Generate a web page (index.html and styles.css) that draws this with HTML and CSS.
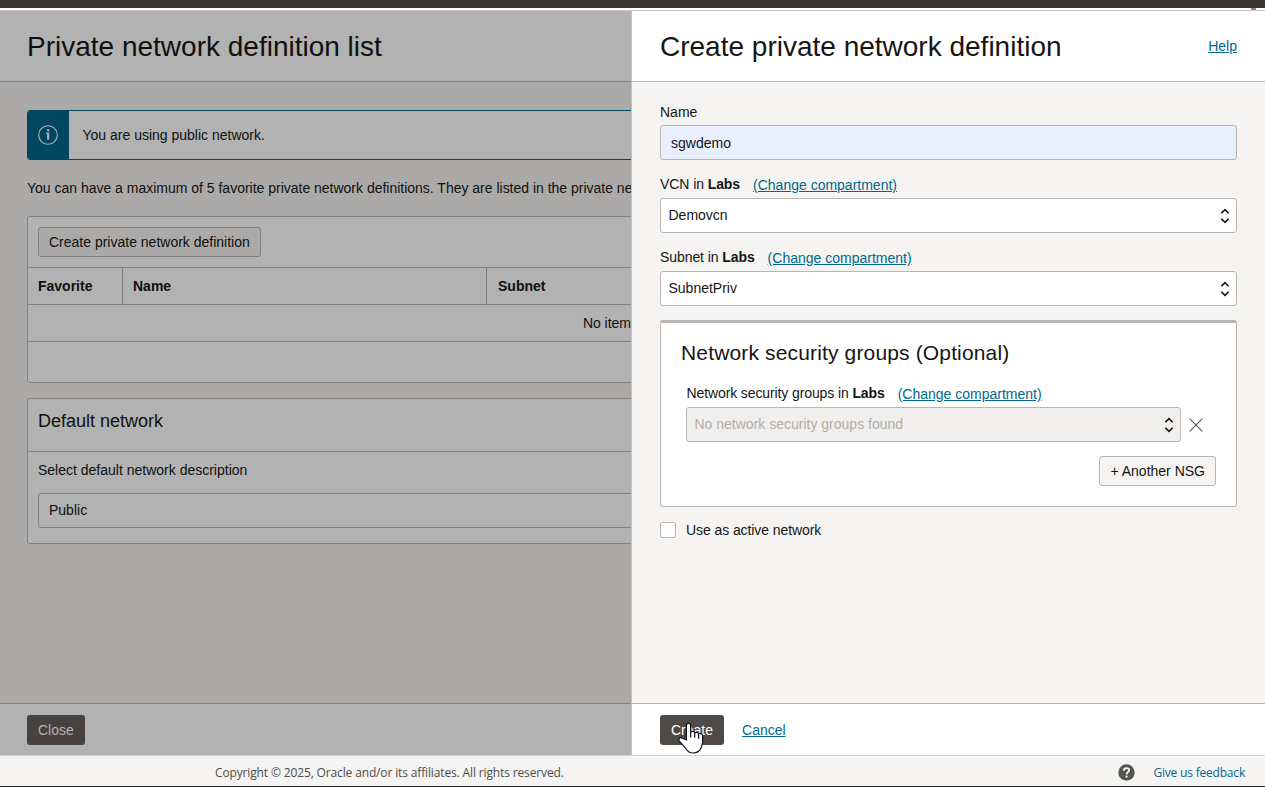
FILE: index.html
```html
<!DOCTYPE html>
<html lang="en">
<head>
<meta charset="utf-8">
<title>Create private network definition</title>
<link rel="stylesheet" href="styles.css">
</head>
<body>
<div class="topbar"></div>
<div class="topgap"><span class="topmark"></span></div>
<div class="stage">
  <section class="page">
    <header class="head"><h1>Private network definition list</h1></header>
    <div class="content">
      <div class="banner">
        <div class="banner-icon">
          <svg width="20" height="20" viewBox="0 0 20 20"><circle cx="10" cy="10" r="9.3" fill="none" stroke="#b2b2b2" stroke-width="1.1"/><path d="M8.2 7.6h3v7.2H9.1V9.1h-.9zM9.1 4.3h2.1v2H9.1z" fill="#b2b2b2"/></svg>
        </div>
        <div class="banner-text">You are using public network.</div>
      </div>
      <p class="note">You can have a maximum of 5 favorite private network definitions. They are listed in the private ne</p>
      <div class="card">
        <div class="tools"><button class="btn dim">Create private network definition</button></div>
        <div class="row thead"><div class="c1">Favorite</div><div class="c2">Name</div><div class="c3">Subnet</div></div>
        <div class="row empty">No item</div>
        <div class="rest"></div>
      </div>
      <div class="card default">
        <h2>Default network</h2>
        <div class="default-body">
          <label>Select default network description</label>
          <div class="field dimfield">Public</div>
        </div>
      </div>
    </div>
    <footer class="actions"><button class="primary dimprimary">Close</button></footer>
  </section>
  <section class="drawer">
    <header class="head"><h1>Create private network definition</h1><a class="link" href="#">Help</a></header>
    <div class="form">
      <label class="name-label">Name</label>
      <div class="field filled">sgwdemo</div>
      <div class="label-row"><span>VCN in <b>Labs</b></span><a class="link" href="#">(Change compartment)</a></div>
      <div class="field select">Demovcn<svg class="chev" width="10" height="16" viewBox="0 0 10 16"><path d="M1.3 5.2 5 1.6l3.7 3.6M1.3 10.8 5 14.4l3.7-3.6"/></svg></div>
      <div class="label-row subnet-label"><span>Subnet in <b>Labs</b></span><a class="link" href="#">(Change compartment)</a></div>
      <div class="field select">SubnetPriv<svg class="chev" width="10" height="16" viewBox="0 0 10 16"><path d="M1.3 5.2 5 1.6l3.7 3.6M1.3 10.8 5 14.4l3.7-3.6"/></svg></div>
      <div class="nsg">
        <h3>Network security groups (Optional)</h3>
        <div class="label-row nsg-label"><span>Network security groups in <b>Labs</b></span><a class="link" href="#">(Change compartment)</a></div>
        <div class="nsg-row">
          <div class="field select disabled">No network security groups found<svg class="chev" width="10" height="16" viewBox="0 0 10 16"><path d="M1.3 5.2 5 1.6l3.7 3.6M1.3 10.8 5 14.4l3.7-3.6"/></svg></div>
          <svg width="14" height="14" viewBox="0 0 14 14"><path d="M.7.7l12.6 12.6M13.3.7.7 13.3" fill="none" stroke="#555" stroke-width="1.1"/></svg>
        </div>
        <div class="nsg-add"><button class="btn">+ Another NSG</button></div>
      </div>
      <div class="check-row"><span class="box"></span><span>Use as active network</span></div>
    </div>
    <footer class="actions">
      <button class="primary">Create</button><a class="link" href="#">Cancel</a>
    </footer>
  </section>
  <svg class="cursor" width="28" height="34" viewBox="0 0 28 34"><path d="M8.4 19V4.4c0-3 4.2-3 4.2 0v6.8c.8-1.4 3.8-1 4.1.6 1-.9 3.5-.5 3.9 1 1.1-.9 4-.3 4 1.8v6.6c0 2.3-.9 4-1.5 5.6-1.3 3.6-4.2 5.2-8 5.2-3.6 0-5.6-1.7-7.2-4.3L1 19.7c-.7-2.7 1.6-3.8 3.6-2.5z" fill="#fff" stroke="#101020" stroke-width="1.2" stroke-linejoin="round"/><path d="M12.6 11v5.6M16.7 11.8v5M20.6 12.8v5" fill="none" stroke="#101020" stroke-width="1.2"/></svg>
</div>
<footer class="site-footer">
  <span class="copy">Copyright © 2025, Oracle and/or its affiliates. All rights reserved.</span>
  <span class="feedback"><svg width="17" height="17" viewBox="0 0 17 17"><circle cx="8.5" cy="8.5" r="8.2" fill="#555550"/><path d="M5.8 6.7c0-3.5 5.4-3.4 5.4-.5 0 1.9-2.6 1.9-2.6 4.2" fill="none" stroke="#f5f4f2" stroke-width="1.8"/><path d="M7.6 11.6h2v1.9h-2z" fill="#f5f4f2"/></svg><a href="#">Give us feedback</a></span>
</footer>
<div class="bottomline"></div>
</body>
</html>
```
FILE: styles.css
```css
* { box-sizing: border-box; }
body { margin: 0; width: 1265px; height: 787px; overflow: hidden; background: #f5f4f2; color: #161513; font: 14px/20px "Liberation Sans", Arial, sans-serif; }
h1, h2, h3, p { margin: 0; font-weight: 400; }
button { font: inherit; color: inherit; white-space: nowrap; }
.topbar { height: 8px; background: #3a3631; }
.topgap { height: 2px; background: #fff; display: flex; justify-content: flex-end; padding-right: 9px; }
.topmark { width: 5px; height: 2px; background: #888; }
.stage { position: relative; display: grid; grid-template-columns: 631px 634px; height: 745px; border-top: 1px solid #c8c8c8; }
.page, .drawer { display: grid; grid-template-rows: 71px 621px 52px; min-width: 0; overflow: hidden; }
.page { background: #abaaa8; color: #10100f; }
.drawer { border-left: 1px solid #c4bfba; background: #f5f4f2; }
.head { display: flex; justify-content: space-between; align-items: center; padding: 0 28px; border-bottom: 1px solid #bbb6b1; background: #fff; }
.page .head, .page .actions { background: #b2b2b2; border-color: #83807d; padding-left: 27px; }
h1 { padding-top: 2px; font-size: 28px; line-height: 36px; white-space: nowrap; }
.link { color: #00688c; text-decoration: underline; }
.actions { display: flex; align-items: center; gap: 18px; padding: 0 28px; border-top: 1px solid #bbb6b1; background: #fff; }
.primary { height: 30px; padding: 0 11px; border: 0; border-radius: 3px; background: #504a46; color: #fff; }
.dimprimary { background: #48423f; color: #b2b2b2; }
.content { padding: 28px 0 0 27px; }
.banner { display: flex; width: 900px; height: 50px; border: 1px solid #004862; border-radius: 3px; background: #b2b2b2; overflow: hidden; }
.banner-icon { display: flex; align-items: center; padding-left: 10px; width: 41px; background: #004862; }
.banner-text { padding: 14px 0 0 13.5px; }
.note { margin-top: 18px; white-space: nowrap; letter-spacing: -0.008px; }
.card { margin-top: 18px; width: 1210px; height: 167px; border: 1px solid #83807d; border-radius: 3px; background: #b2b2b2; }
.tools { height: 50px; padding: 10px; }
.btn { display: block; height: 30px; padding: 0 10px; border: 1px solid #bbb6b1; border-radius: 3px; background: #f5f4f2; }
.dim { background: #abaaa8; border-color: #83807d; }
.row { height: 37px; border-top: 1px solid #83807d; line-height: 36px; }
.thead { display: grid; grid-template-columns: 95px 364px 1fr; font-weight: 700; }
.c1, .c2 { border-right: 1px solid #83807d; }
.c1, .c2, .c3 { padding-left: 10px; }
.c3 { padding-left: 11px; }
.empty { padding-left: 555px; letter-spacing: -0.06px; }
.rest { border-top: 1px solid #83807d; }
.default { margin-top: 15px; height: 146px; }
h2 { height: 53px; padding: 11px 10px 0; border-bottom: 1px solid #83807d; font-size: 18px; line-height: 22px; }
.default-body { padding: 8px 10px; }
.default-body label { display: block; margin-bottom: 13px; }
.field { display: flex; align-items: center; height: 35px; padding: 0 10px; border: 1px solid #bbb6b1; border-radius: 3px; background: #fff; }
.dimfield { background: #b2b2b2; border-color: #83807d; padding-bottom: 2px; }
.form { padding: 20px 28px 0; }
.name-label { display: block; height: 23px; }
.filled { background: #e8f0fe; }
.label-row { display: flex; gap: 13px; height: 38px; padding-top: 14px; }
.label-row span { letter-spacing: -0.08px; }
.label-row .link { position: relative; top: 1px; }
.select { justify-content: space-between; padding: 0 6px 2px 7.5px; }
.chev { position: relative; top: 1px; fill: none; stroke: #161513; stroke-width: 1.6; }
.nsg { height: 187px; margin-top: 14px; border: 1px solid #bbb6b1; border-top-width: 3px; border-radius: 3px; background: #fff; }
h3 { height: 46px; padding: 18px 20px 0; font-size: 21px; line-height: 24px; letter-spacing: 0.15px; }
.nsg-label { padding-left: 25.5px; }
.nsg-label span { letter-spacing: -0.11px; }
.nsg-row { display: flex; align-items: center; gap: 8px; padding-left: 25px; }
.nsg-row .field { width: 495px; }
.disabled { background: #f0efed; color: #b3ada8; }
.nsg-add { display: flex; justify-content: flex-end; padding: 14px 20px 0 0; }
.check-row { display: flex; align-items: center; gap: 10px; margin-top: 13px; letter-spacing: -0.08px; }
.box { width: 16px; height: 16px; border: 1px solid #bbb6b1; border-radius: 2px; background: #fff; }
.cursor { position: absolute; left: 678px; top: 710px; }
.site-footer { display: flex; justify-content: space-between; align-items: center; height: 31px; padding: 3px 20px 0 215px; border-top: 1px solid #d5d3d1; font: 12px/20px "Open Sans", sans-serif; letter-spacing: -0.14px; color: #4e4d4a; }
.feedback { display: flex; align-items: center; gap: 18px; letter-spacing: -0.2px; }
.feedback a { color: #00688c; text-decoration: none; }
.bottomline { height: 1px; background: #22262a; }
```
